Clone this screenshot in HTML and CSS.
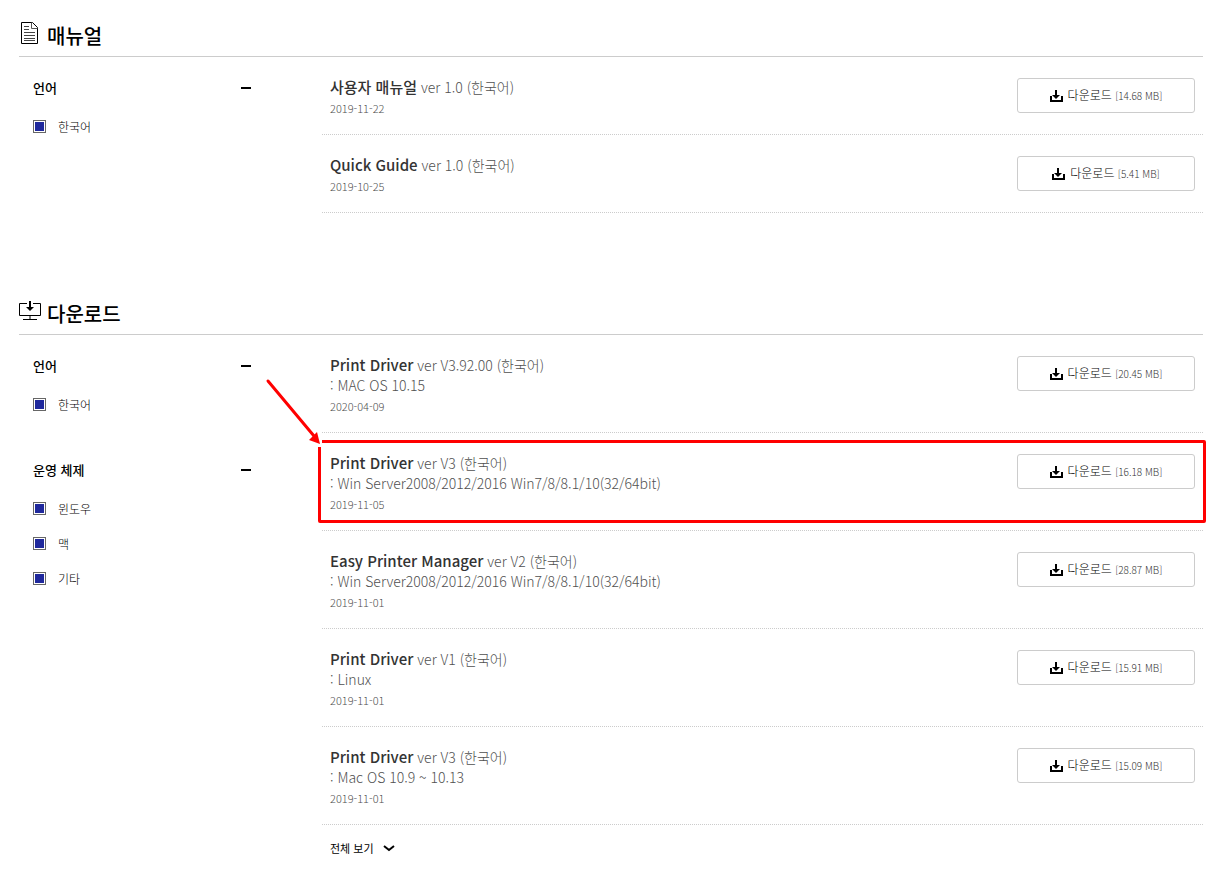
FILE: index.html
```html
<!DOCTYPE html>
<html lang="ko">
<head>
<meta charset="utf-8">
<title>매뉴얼 및 다운로드</title>
<link rel="stylesheet" href="styles.css">
</head>
<body>
<svg class="defs" aria-hidden="true">
  <symbol id="i-down" viewBox="0 0 13 12">
    <path d="M5 0h2v5h3L6 9 2 5h3z"/>
    <path d="M0 6h2v4h9V6h2v6H0z"/>
  </symbol>
</svg>
<main class="page">
  <section class="block">
    <h2 class="block-title">
      <svg class="title-icon" width="22" height="24" viewBox="0 0 22 24" aria-hidden="true">
        <path d="M2.500 1.500h11l5 5v16h-16z" fill="#fff" stroke="#000"/>
        <path d="M12.500 1.500v6h6" fill="none" stroke="#555"/>
        <path d="M5 5.500h5M5 8.500h5M5 11.500h11M5 14.500h11M5 17.500h11M5 19.500h11" stroke="#444"/>
      </svg>
      매뉴얼
    </h2>
    <div class="columns">
      <aside class="filters">
        <fieldset class="group" aria-label="언어">
          <div class="group-head"><span>언어</span><button class="fold" type="button" aria-label="언어 접기"></button></div>
          <label class="option"><input class="check" type="checkbox" checked>한국어</label>
        </fieldset>
      </aside>
      <ul class="files">
        <li class="file">
          <div class="info">
            <p class="name"><strong>사용자 매뉴얼</strong> <span>ver 1.0 (한국어)</span></p>
            <p class="date">2019-11-22</p>
          </div>
          <button class="download" type="button"><svg class="down-icon"><use href="#i-down"/></svg><span>다운로드 <small>[14.68 MB]</small></span></button>
        </li>
        <li class="file">
          <div class="info">
            <p class="name"><strong>Quick Guide</strong> <span>ver 1.0 (한국어)</span></p>
            <p class="date">2019-10-25</p>
          </div>
          <button class="download" type="button"><svg class="down-icon"><use href="#i-down"/></svg><span>다운로드 <small>[5.41 MB]</small></span></button>
        </li>
      </ul>
    </div>
  </section>

  <section class="block">
    <h2 class="block-title">
      <svg class="title-icon" width="22" height="24" viewBox="0 0 22 24" aria-hidden="true">
        <path d="M8 4.500H.5v12h21v-12H14M11 17v3M4 20.500h14" fill="none" stroke="#000"/>
        <path d="M10 2h2v6h3l-4 4-4-4h3z"/>
      </svg>
      다운로드
    </h2>
    <div class="columns">
      <aside class="filters">
        <fieldset class="group" aria-label="언어">
          <div class="group-head"><span>언어</span><button class="fold" type="button" aria-label="언어 접기"></button></div>
          <label class="option"><input class="check" type="checkbox" checked>한국어</label>
        </fieldset>
        <fieldset class="group" aria-label="운영 체제">
          <div class="group-head"><span>운영 체제</span><button class="fold" type="button" aria-label="운영 체제 접기"></button></div>
          <label class="option"><input class="check" type="checkbox" checked>윈도우</label>
          <label class="option"><input class="check" type="checkbox" checked>맥</label>
          <label class="option"><input class="check" type="checkbox" checked>기타</label>
        </fieldset>
      </aside>
      <div class="results">
        <ul class="files">
          <li class="file">
            <div class="info">
              <p class="name"><strong>Print Driver</strong> <span>ver V3.92.00 (한국어)</span></p>
              <p class="desc">: MAC OS 10.15</p>
              <p class="date">2020-04-09</p>
            </div>
            <button class="download" type="button"><svg class="down-icon"><use href="#i-down"/></svg><span>다운로드 <small>[20.45 MB]</small></span></button>
          </li>
          <li class="file marked">
            <div class="info">
              <p class="name"><strong>Print Driver</strong> <span>ver V3 (한국어)</span></p>
              <p class="desc">: Win Server2008/2012/2016 Win7/8/8.1/10(32/64bit)</p>
              <p class="date">2019-11-05</p>
            </div>
            <button class="download" type="button"><svg class="down-icon"><use href="#i-down"/></svg><span>다운로드 <small>[16.18 MB]</small></span></button>
            <svg class="arrow" width="60" height="72" viewBox="0 0 60 72" aria-hidden="true">
              <path d="M54 64h5v7h-5z" fill="#fff"/>
              <path d="M5 5l46 55" stroke="#f00" stroke-width="3" stroke-linecap="round"/>
              <path d="M57 68l-11-4 8-8z" fill="#f00"/>
            </svg>
          </li>
          <li class="file">
            <div class="info">
              <p class="name"><strong>Easy Printer Manager</strong> <span>ver V2 (한국어)</span></p>
              <p class="desc">: Win Server2008/2012/2016 Win7/8/8.1/10(32/64bit)</p>
              <p class="date">2019-11-01</p>
            </div>
            <button class="download" type="button"><svg class="down-icon"><use href="#i-down"/></svg><span>다운로드 <small>[28.87 MB]</small></span></button>
          </li>
          <li class="file">
            <div class="info">
              <p class="name"><strong>Print Driver</strong> <span>ver V1 (한국어)</span></p>
              <p class="desc">: Linux</p>
              <p class="date">2019-11-01</p>
            </div>
            <button class="download" type="button"><svg class="down-icon"><use href="#i-down"/></svg><span>다운로드 <small>[15.91 MB]</small></span></button>
          </li>
          <li class="file">
            <div class="info">
              <p class="name"><strong>Print Driver</strong> <span>ver V3 (한국어)</span></p>
              <p class="desc">: Mac OS 10.9 ~ 10.13</p>
              <p class="date">2019-11-01</p>
            </div>
            <button class="download" type="button"><svg class="down-icon"><use href="#i-down"/></svg><span>다운로드 <small>[15.09 MB]</small></span></button>
          </li>
        </ul>
        <button class="more" type="button">전체 보기
          <svg width="12" height="8" viewBox="0 0 12 8" aria-hidden="true"><path d="M1 2l5 4 5-4" fill="none" stroke="#000" stroke-width="2"/></svg>
        </button>
      </div>
    </div>
  </section>
</main>
</body>
</html>
```
FILE: styles.css
```css
* { box-sizing: border-box; }

body {
  margin: 0;
  background: #fff;
  color: #000;
  font-family: "Noto Sans CJK KR", "Noto Sans", sans-serif;
}

h2, p, ul, fieldset { margin: 0; padding: 0; border: 0; }
ul { list-style: none; }
button { font-family: inherit; cursor: pointer; }
.defs { display: none; }

.page {
  display: flex;
  flex-direction: column;
  gap: 65px;
  padding: 0 20px 0 19px;
}

.block-title {
  display: flex;
  align-items: flex-start;
  gap: 6px;
  padding: 21px 0 5px;
  border-bottom: 1px solid #ccc;
  font-size: 20px;
  line-height: 30px;
  font-weight: 500;
}

.columns {
  display: grid;
  grid-template-columns: 303px minmax(0, 1fr);
}

.filters {
  display: flex;
  flex-direction: column;
  gap: 36px;
  padding: 19px 71px 0 14px;
}

.group-head {
  display: flex;
  align-items: center;
  justify-content: space-between;
  margin-bottom: 9px;
  font-size: 13px;
  line-height: 24px;
  font-weight: 500;
}

.fold {
  width: 10px;
  height: 2px;
  padding: 0;
  border: 0;
  background: #000;
}

.option {
  display: flex;
  align-items: center;
  gap: 12px;
  height: 35px;
  font-size: 12px;
  line-height: 20px;
  font-weight: 300;
}

.check {
  appearance: none;
  width: 13px;
  height: 13px;
  margin: 0;
  padding: 1px;
  border: 1px solid #666;
  background: #1f289c content-box;
}

.file {
  position: relative;
  display: flex;
  align-items: flex-start;
  justify-content: space-between;
  padding: 20px 8px 15px;
  border-bottom: 1px dotted #ccc;
}

.info { color: #505050; font-weight: 300; }
.name { font-size: 14px; line-height: 20px; }
.name strong { color: #333; font-size: 15px; line-height: 16px; font-weight: 500; }
.desc { font-size: 14px; line-height: 20px; }
.date { font-size: 11px; line-height: 22px; }

.download {
  display: flex;
  align-items: center;
  justify-content: center;
  gap: 5px;
  width: 178px;
  height: 35px;
  margin-top: 1px;
  padding: 0;
  border: 1px solid #ccc;
  border-radius: 3px;
  background: #fff;
  color: #000;
  font-size: 12px;
  line-height: 20px;
  font-weight: 300;
}

.download small { color: #333; font-size: 10px; }
.down-icon { width: 13px; height: 12px; }

.marked::after {
  content: "";
  position: absolute;
  inset: 7px -3px 7px -4px;
  border: 3px solid #f00;
  border-radius: 2px;
  pointer-events: none;
}

.arrow {
  position: absolute;
  z-index: 1;
  top: -57px;
  left: -59px;
}

.more {
  display: flex;
  align-items: center;
  gap: 9px;
  padding: 12px 8px;
  border: 0;
  background: none;
  color: #000;
  font-size: 11px;
  line-height: 22px;
}
```
